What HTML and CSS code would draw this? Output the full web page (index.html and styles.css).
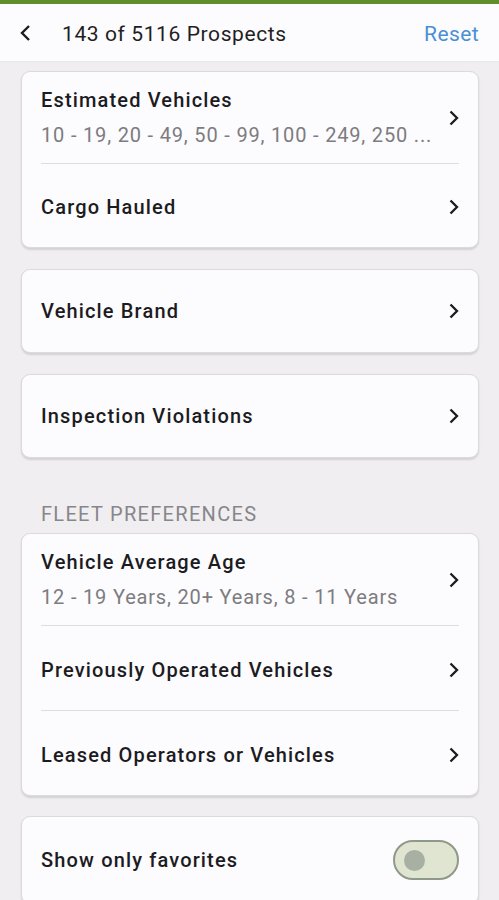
FILE: index.html
```html
<!DOCTYPE html>
<html>
<head>
<meta charset="utf-8">
<link rel="stylesheet" href="styles.css">
</head>
<body>
<div class="topbar"></div>
<header class="header">
  <svg class="back" width="14" height="18" viewBox="0 0 14 18"><path d="M10 2 L3 9 L10 16" fill="none" stroke="#1c1b1f" stroke-width="2.4"/></svg>
  <div class="title">143 of 5116 Prospects</div>
  <div class="reset">Reset</div>
</header>
<main class="content">
  <section class="card">
    <div class="row tall">
      <div class="text">
        <div class="label">Estimated Vehicles</div>
        <div class="sub">10 - 19, 20 - 49, 50 - 99, 100 - 249, 250 ...</div>
      </div>
      <svg class="chev" width="12" height="16" viewBox="0 0 12 16"><path d="M2.5 1.5 L9 8 L2.5 14.5" fill="none" stroke="#1c1b1f" stroke-width="2.3"/></svg>
    </div>
    <div class="divider"></div>
    <div class="row short">
      <div class="text"><div class="label">Cargo Hauled</div></div>
      <svg class="chev" width="12" height="16" viewBox="0 0 12 16"><path d="M2.5 1.5 L9 8 L2.5 14.5" fill="none" stroke="#1c1b1f" stroke-width="2.3"/></svg>
    </div>
  </section>
  <section class="card">
    <div class="row single">
      <div class="text"><div class="label">Vehicle Brand</div></div>
      <svg class="chev" width="12" height="16" viewBox="0 0 12 16"><path d="M2.5 1.5 L9 8 L2.5 14.5" fill="none" stroke="#1c1b1f" stroke-width="2.3"/></svg>
    </div>
  </section>
  <section class="card">
    <div class="row single">
      <div class="text"><div class="label">Inspection Violations</div></div>
      <svg class="chev" width="12" height="16" viewBox="0 0 12 16"><path d="M2.5 1.5 L9 8 L2.5 14.5" fill="none" stroke="#1c1b1f" stroke-width="2.3"/></svg>
    </div>
  </section>
  <div class="section-title">FLEET PREFERENCES</div>
  <section class="card last-list">
    <div class="row tall">
      <div class="text">
        <div class="label">Vehicle Average Age</div>
        <div class="sub">12 - 19 Years, 20+ Years, 8 - 11 Years</div>
      </div>
      <svg class="chev" width="12" height="16" viewBox="0 0 12 16"><path d="M2.5 1.5 L9 8 L2.5 14.5" fill="none" stroke="#1c1b1f" stroke-width="2.3"/></svg>
    </div>
    <div class="divider"></div>
    <div class="row">
      <div class="text"><div class="label">Previously Operated Vehicles</div></div>
      <svg class="chev" width="12" height="16" viewBox="0 0 12 16"><path d="M2.5 1.5 L9 8 L2.5 14.5" fill="none" stroke="#1c1b1f" stroke-width="2.3"/></svg>
    </div>
    <div class="divider"></div>
    <div class="row">
      <div class="text"><div class="label">Leased Operators or Vehicles</div></div>
      <svg class="chev" width="12" height="16" viewBox="0 0 12 16"><path d="M2.5 1.5 L9 8 L2.5 14.5" fill="none" stroke="#1c1b1f" stroke-width="2.3"/></svg>
    </div>
  </section>
  <section class="card">
    <div class="row toggle-row">
      <div class="text"><div class="label">Show only favorites</div></div>
      <div class="toggle"><div class="knob"></div></div>
    </div>
  </section>
</main>
</body>
</html>
```
FILE: styles.css
```css
* { box-sizing: border-box; }
html, body {
  margin: 0;
  padding: 0;
  background: #f0eef1;
  font-family: Roboto, "Noto Sans", sans-serif;
  color: #1c1b1f;
  height: 900px;
  overflow: hidden;
}
.topbar {
  height: 4px;
  background: #5f8f2c;
}
.header {
  height: 57px;
  background: #fcfbfd;
  display: flex;
  align-items: center;
  padding: 0 20px 0 19px;
  box-shadow: 0 1px 2px rgba(0,0,0,0.04);
}
.back { flex: none; }
.title {
  margin-left: 29px;
  margin-top: 2px;
  font-size: 21px;
  letter-spacing: 0.6px;
  color: #1f1e22;
  flex: 1;
}
.reset {
  margin-top: 2px;
  font-size: 21px;
  letter-spacing: 0.4px;
  color: #4b8fd5;
}
.content {
  padding: 10px 20px 0 21px;
  display: flex;
  flex-direction: column;
}
.card {
  background: #fcfbfd;
  border: 1px solid #dcdadf;
  border-radius: 9px;
  box-shadow: 0 1.5px 2px rgba(0,0,0,0.12);
  padding: 0 19px;
  margin-bottom: 21px;
}
.card.last-list { margin-bottom: 20px; }
.row {
  display: flex;
  align-items: center;
  height: 84px;
  padding-top: 3px;
}
.row.short { height: 83px; }
.row.tall { height: 91px; padding-top: 0; }
.row.single { height: 82px; padding-top: 0; }
.text { flex: 1; min-width: 0; }
.label {
  font-size: 20px;
  font-weight: 500;
  letter-spacing: 1.15px;
}
.sub {
  margin-top: 11px;
  font-size: 20px;
  color: #7d7c80;
  letter-spacing: 0.82px;
  white-space: nowrap;
  overflow: hidden;
}
.chev { flex: none; margin-right: -1px; }
.divider {
  height: 1px;
  background: #dedce1;
}
.section-title {
  margin: 23px 0 7px 20px;
  font-size: 20px;
  color: #87868a;
  letter-spacing: 1.3px;
}
.toggle-row { height: 86px; padding-top: 0; }
.toggle {
  flex: none;
  width: 66px;
  height: 40px;
  border-radius: 20px;
  background: #dfe5d1;
  border: 2px solid #8f9989;
  display: flex;
  align-items: center;
  padding-left: 9px;
}
.knob {
  width: 21px;
  height: 21px;
  border-radius: 50%;
  background: #a8afa3;
}
```
